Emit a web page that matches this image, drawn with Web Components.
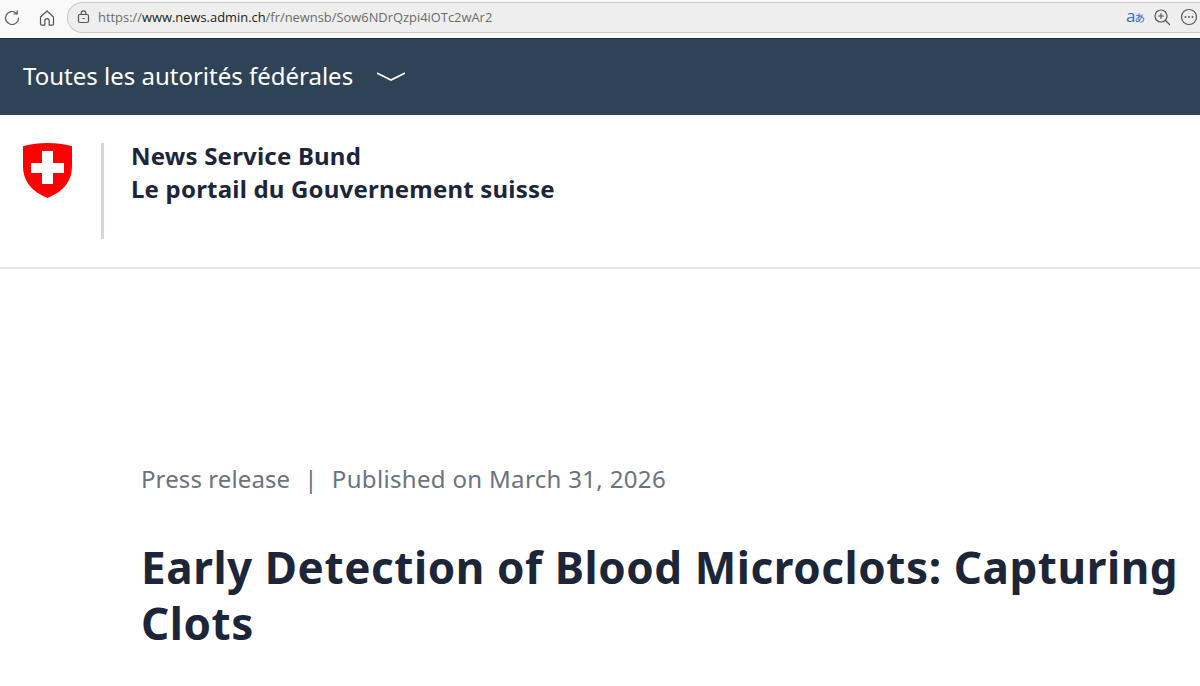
<!DOCTYPE html>
<html lang="fr">
<head>
<meta charset="utf-8">
<title>News Service Bund</title>
<style>
    html, body {
        margin: 0;
        padding: 0;
        background: #fff;
        overflow: hidden;
    }
    body {
        width: 1200px;
        height: 686px;
        font-family: "Noto Sans", sans-serif;
    }
</style>
</head>
<body>
<browser-bar url-host="www.news.admin.ch" url-path="/fr/newnsb/Sow6NDrQzpi4iOTc2wAr2"></browser-bar>
<top-bar>Toutes les autorités fédérales</top-bar>
<site-header>
    <span>News Service Bund</span>
    <span>Le portail du Gouvernement suisse</span>
</site-header>
<press-article meta-type="Press release" meta-date="Published on March 31, 2026">
    Early Detection of Blood Microclots: Capturing<br>Clots
</press-article>

<script>
class BrowserBar extends HTMLElement {

    constructor() {
        super();
        this.shadowDOM = this.attachShadow({ mode: "open" });
    }

    connectedCallback() {
        this.render();
    }

    render() {
        this.shadowDOM.innerHTML = `
        <style>
            :host {
                display: flex;
                align-items: center;
                height: 36px;
                padding-bottom: 2px;
                background: #f9f9f9;
                font-family: "Open Sans", sans-serif;
            }
            svg {
                display: block;
                flex: none;
                fill: none;
                stroke: #555;
                stroke-width: 1.2;
                stroke-linecap: round;
                stroke-linejoin: round;
            }
            .reload { margin-left: 4px; }
            .home { margin-left: 18px; }
            .address {
                flex: 1;
                display: flex;
                align-items: center;
                height: 31px;
                margin-top: -2px;
                margin-left: 11px;
                padding-left: 9px;
                padding-right: 2px;
                background: #eeeeee;
                border: 1px solid #c9c9c9;
                border-right: 0;
                border-radius: 16px 0 0 16px;
                box-sizing: border-box;
            }
            .url {
                flex: 1;
                margin-left: 8px;
                font-size: 12.9px;
                color: #6b6b6b;
                white-space: nowrap;
            }
            .url b {
                font-weight: 400;
                color: #1c1c1c;
            }
            .tools {
                display: flex;
                align-items: center;
                gap: 9px;
            }
            .translate {
                width: 18px;
                line-height: 16px;
                color: #2b6fc9;
                white-space: nowrap;
                font-size: 17px;
            }
            .translate small {
                margin-left: -1px;
                font-family: "Noto Sans CJK JP", sans-serif;
                font-size: 10.5px;
            }
        </style>
        <svg class="reload" width="16" height="16" viewBox="0 0 16 16">
            <path d="M14.500 8a6.500 6.500 0 1 1-2-4.700"/>
            <path d="M13.200 .8v3.200H10"/>
        </svg>
        <svg class="home" width="18" height="18" viewBox="0 0 18 18">
            <path d="M2.500 8l6.500-6 6.500 6v7a1.200 1.200 0 0 1-1.200 1.200H11.200v-4.400a2.200 2.200 0 0 0-4.400 0v4.400H3.700a1.200 1.200 0 0 1-1.200-1.200z"/>
        </svg>
        <div class="address">
            <svg class="lock" width="13" height="14" viewBox="0 0 13 14">
                <rect x="1.500" y="4.500" width="10" height="8" rx="1.500"/>
                <path d="M4.200 4.500V3.200a2.300 2.300 0 0 1 4.600 0v1.300"/>
                <path d="M5.800 8.500h1.400"/>
            </svg>
            <span class="url">https://<b>${this.getAttribute("url-host")}</b>${this.getAttribute("url-path")}</span>
            <div class="tools">
                <span class="translate">a<small>あ</small></span>
                <svg width="18" height="18" viewBox="0 0 18 18">
                    <circle cx="8" cy="8" r="6"/>
                    <path d="M12.500 12.500l4 4M5.500 8h5M8 5.500v5"/>
                </svg>
                <svg width="18" height="18" viewBox="0 0 18 18">
                    <circle cx="9" cy="9" r="7.500"/>
                    <circle cx="5.500" cy="9" r=".4"/>
                    <circle cx="9" cy="9" r=".4"/>
                    <circle cx="12.500" cy="9" r=".4"/>
                </svg>
            </div>
        </div>`;
    }
}

class TopBar extends HTMLElement {

    constructor() {
        super();
        this.shadowDOM = this.attachShadow({ mode: "open" });
    }

    connectedCallback() {
        this.render();
    }

    render() {
        this.shadowDOM.innerHTML = `
        <style>
            :host {
                display: flex;
                align-items: center;
                gap: 24px;
                height: 77px;
                padding: 0 0 3px 23px;
                background: #2f4356;
                color: #fff;
                font-size: 24px;
                border-top: 1px solid #1f2f3f;
                box-sizing: border-box;
            }
            svg {
                display: block;
                fill: none;
                stroke: #fff;
                stroke-width: 1.6;
                margin-top: 3px;
            }
        </style>
        <slot></slot>
        <svg width="28" height="10" viewBox="0 0 28 10">
            <path d="M0 1l14 7 14-7"/>
        </svg>`;
    }
}

class SiteHeader extends HTMLElement {

    constructor() {
        super();
        this.shadowDOM = this.attachShadow({ mode: "open" });
    }

    connectedCallback() {
        this.render();
    }

    render() {
        this.shadowDOM.innerHTML = `
        <style>
            :host {
                display: flex;
                align-items: flex-start;
                height: 154px;
                padding: 28px 0 0 23px;
                box-sizing: border-box;
                border-bottom: 2px solid #e3e5e8;
            }
            svg {
                display: block;
                flex: none;
            }
            .divider {
                width: 3px;
                height: 96px;
                margin-left: 29px;
                background: #d3d6de;
            }
            .title {
                display: flex;
                flex-direction: column;
                margin-top: -4px;
                margin-left: 27px;
                font-size: 24px;
                line-height: 33px;
                letter-spacing: .2px;
                font-weight: 700;
                color: #1c2638;
            }
            ::slotted(span) {
                display: block;
            }
        </style>
        <svg width="49" height="55" viewBox="0 0 49 55">
            <path fill="#ff0000" d="M0 3.200C8 1 16 0 24.500 0S41 1 49 3.200V23c0 15-8 25-24.500 32C8 48 0 38 0 23z"/>
            <path fill="#fff" d="M19 8h11v12h11v10H30v11H19V30H8V20h11z"/>
        </svg>
        <div class="divider"></div>
        <div class="title"><slot></slot></div>`;
    }
}

class PressArticle extends HTMLElement {

    constructor() {
        super();
        this.shadowDOM = this.attachShadow({ mode: "open" });
    }

    connectedCallback() {
        this.render();
    }

    render() {
        this.shadowDOM.innerHTML = `
        <style>
            :host {
                display: block;
                padding: 192px 0 0 141px;
            }
            .meta {
                display: flex;
                gap: 14px;
                font-size: 24px;
                line-height: 36px;
                letter-spacing: .33px;
                color: #6b7280;
            }
            .type {
                letter-spacing: .1px;
            }
            h1 {
                margin: 42px 0 0;
                font-size: 44px;
                line-height: 56px;
                letter-spacing: .58px;
                font-weight: 700;
                color: #1c2638;
                white-space: nowrap;
            }
        </style>
        <div class="meta">
            <span class="type">${this.getAttribute("meta-type")}</span>
            <span>|</span>
            <span>${this.getAttribute("meta-date")}</span>
        </div>
        <h1><slot></slot></h1>`;
    }
}

customElements.define("browser-bar", BrowserBar);
customElements.define("top-bar", TopBar);
customElements.define("site-header", SiteHeader);
customElements.define("press-article", PressArticle);
</script>
</body>
</html>
